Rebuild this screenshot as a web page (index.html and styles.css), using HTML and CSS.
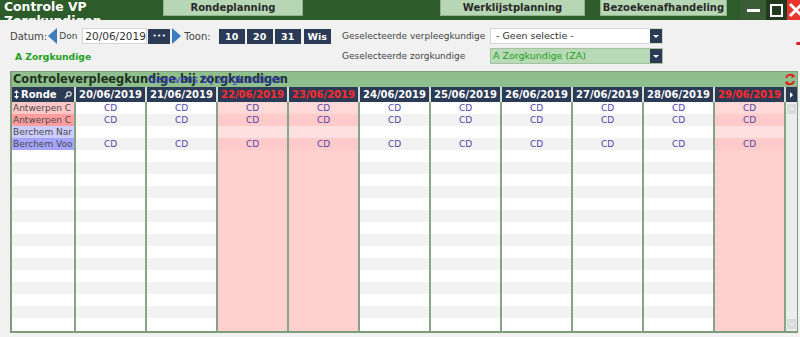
FILE: index.html
```html
<!DOCTYPE html>
<html>
<head>
<meta charset="utf-8">
<title>Controle VP Zorgkundigen</title>
<link rel="stylesheet" href="styles.css">
</head>
<body>
<header class="topbar">
  <div class="apptitle">Controle VP Zorgkundigen</div>
  <div class="tab t1">Rondeplanning</div>
  <div class="tab t2">Werklijstplanning</div>
  <div class="tab t3">Bezoekenafhandeling</div>
  <div class="winctl">
    <div class="wbtn wmin"><span class="minbar"></span></div>
    <div class="wbtn wmax"><span class="maxbox"></span></div>
    <div class="wbtn wclose"><svg width="13" height="20" viewBox="0 0 13 20"><path d="M3 4 L15 16 M15 4 L3 16" stroke="#fff" stroke-width="3" fill="none"/></svg></div>
  </div>
</header>

<section class="controls">
  <div class="leftctl">
    <div class="daterow">
      <span class="lbl">Datum:</span>
      <span class="arrow-l"></span>
      <span class="day">Don</span>
      <span class="datebox">20/06/2019</span>
      <span class="dots">•••</span>
      <span class="arrow-r"></span>
      <span class="lbl toon">Toon:</span>
      <span class="nbtn first">10</span>
      <span class="nbtn">20</span>
      <span class="nbtn">31</span>
      <span class="nbtn wis">Wis</span>
    </div>
    <div class="zk">A Zorgkundige</div>
  </div>
  <div class="rightctl">
    <span class="slbl">Geselecteerde verpleegkundige</span>
    <div class="sel"><span class="seltext">- Geen selectie -</span><span class="dd"></span></div>
    <span class="slbl">Geselecteerde zorgkundige</span>
    <div class="sel green"><span class="seltext">A Zorgkundige (ZA)</span><span class="dd"></span></div>
  </div>
  <span class="redmark"></span>
</section>

<section class="panel">
  <div class="ptitle">
    <span class="ptext">Controleverpleegkundige bij zorgkundigen</span>
    <span class="poverlay">Gegevens bij zorgkundigen</span>
    <svg class="refresh" width="12" height="13" viewBox="0 0 12 13">
      <path d="M2 5 A4.5 4.5 0 0 1 9.5 3" stroke="#e02020" stroke-width="2" fill="none"/>
      <path d="M8 0.5 L11.5 3.5 L7.5 5 Z" fill="#e02020"/>
      <path d="M10 8 A4.5 4.5 0 0 1 2.5 10" stroke="#e02020" stroke-width="2" fill="none"/>
      <path d="M4 12.5 L0.5 9.5 L4.5 8 Z" fill="#e02020"/>
    </svg>
  </div>
  <div class="gridwrap">
    <div class="gcols">
      <div class="hrow">
        <div class="hc ronde">
          <svg class="sorticon" width="5" height="9" viewBox="0 0 5 9"><path d="M2.5 0 L5 3 L0 3 Z M2.5 9 L5 6 L0 6 Z" fill="#fff"/><rect x="2" y="3" width="1" height="3" fill="#fff"/></svg>
          <span class="rtext">Ronde</span>
          <svg class="mag" width="8" height="8" viewBox="0 0 8 8"><circle cx="5" cy="3" r="2.2" stroke="#e8e8e8" stroke-width="1.2" fill="none"/><path d="M3.4 4.6 L0.8 7.2" stroke="#e8e8e8" stroke-width="1.4"/></svg>
        </div>
        <div class="hc">20/06/2019</div>
        <div class="hc">21/06/2019</div>
        <div class="hc wk">22/06/2019</div>
        <div class="hc wk">23/06/2019</div>
        <div class="hc">24/06/2019</div>
        <div class="hc">25/06/2019</div>
        <div class="hc">26/06/2019</div>
        <div class="hc">27/06/2019</div>
        <div class="hc">28/06/2019</div>
        <div class="hc wk">29/06/2019</div>
      </div>
      <div class="brow odd r1">
        <div class="bc rc">Antwerpen C</div><div class="bc">CD</div><div class="bc">CD</div><div class="bc we">CD</div><div class="bc we">CD</div><div class="bc">CD</div><div class="bc">CD</div><div class="bc">CD</div><div class="bc">CD</div><div class="bc">CD</div><div class="bc we">CD</div>
      </div>
      <div class="brow even r2">
        <div class="bc rc">Antwerpen C</div><div class="bc">CD</div><div class="bc">CD</div><div class="bc we">CD</div><div class="bc we">CD</div><div class="bc">CD</div><div class="bc">CD</div><div class="bc">CD</div><div class="bc">CD</div><div class="bc">CD</div><div class="bc we">CD</div>
      </div>
      <div class="brow odd r3">
        <div class="bc rc">Berchem Nar</div><div class="bc"></div><div class="bc"></div><div class="bc we"></div><div class="bc we"></div><div class="bc"></div><div class="bc"></div><div class="bc"></div><div class="bc"></div><div class="bc"></div><div class="bc we"></div>
      </div>
      <div class="brow even r4">
        <div class="bc rc">Berchem Voo</div><div class="bc">CD</div><div class="bc">CD</div><div class="bc we">CD</div><div class="bc we">CD</div><div class="bc">CD</div><div class="bc">CD</div><div class="bc">CD</div><div class="bc">CD</div><div class="bc">CD</div><div class="bc we">CD</div>
      </div>
      <div class="brow odd"><div class="bc rc"></div><div class="bc"></div><div class="bc"></div><div class="bc we"></div><div class="bc we"></div><div class="bc"></div><div class="bc"></div><div class="bc"></div><div class="bc"></div><div class="bc"></div><div class="bc we"></div></div>
      <div class="brow even"><div class="bc rc"></div><div class="bc"></div><div class="bc"></div><div class="bc we"></div><div class="bc we"></div><div class="bc"></div><div class="bc"></div><div class="bc"></div><div class="bc"></div><div class="bc"></div><div class="bc we"></div></div>
      <div class="brow odd"><div class="bc rc"></div><div class="bc"></div><div class="bc"></div><div class="bc we"></div><div class="bc we"></div><div class="bc"></div><div class="bc"></div><div class="bc"></div><div class="bc"></div><div class="bc"></div><div class="bc we"></div></div>
      <div class="brow even"><div class="bc rc"></div><div class="bc"></div><div class="bc"></div><div class="bc we"></div><div class="bc we"></div><div class="bc"></div><div class="bc"></div><div class="bc"></div><div class="bc"></div><div class="bc"></div><div class="bc we"></div></div>
      <div class="brow odd"><div class="bc rc"></div><div class="bc"></div><div class="bc"></div><div class="bc we"></div><div class="bc we"></div><div class="bc"></div><div class="bc"></div><div class="bc"></div><div class="bc"></div><div class="bc"></div><div class="bc we"></div></div>
      <div class="brow even"><div class="bc rc"></div><div class="bc"></div><div class="bc"></div><div class="bc we"></div><div class="bc we"></div><div class="bc"></div><div class="bc"></div><div class="bc"></div><div class="bc"></div><div class="bc"></div><div class="bc we"></div></div>
      <div class="brow odd"><div class="bc rc"></div><div class="bc"></div><div class="bc"></div><div class="bc we"></div><div class="bc we"></div><div class="bc"></div><div class="bc"></div><div class="bc"></div><div class="bc"></div><div class="bc"></div><div class="bc we"></div></div>
      <div class="brow even"><div class="bc rc"></div><div class="bc"></div><div class="bc"></div><div class="bc we"></div><div class="bc we"></div><div class="bc"></div><div class="bc"></div><div class="bc"></div><div class="bc"></div><div class="bc"></div><div class="bc we"></div></div>
      <div class="brow odd"><div class="bc rc"></div><div class="bc"></div><div class="bc"></div><div class="bc we"></div><div class="bc we"></div><div class="bc"></div><div class="bc"></div><div class="bc"></div><div class="bc"></div><div class="bc"></div><div class="bc we"></div></div>
      <div class="brow even"><div class="bc rc"></div><div class="bc"></div><div class="bc"></div><div class="bc we"></div><div class="bc we"></div><div class="bc"></div><div class="bc"></div><div class="bc"></div><div class="bc"></div><div class="bc"></div><div class="bc we"></div></div>
      <div class="brow odd"><div class="bc rc"></div><div class="bc"></div><div class="bc"></div><div class="bc we"></div><div class="bc we"></div><div class="bc"></div><div class="bc"></div><div class="bc"></div><div class="bc"></div><div class="bc"></div><div class="bc we"></div></div>
      <div class="brow even"><div class="bc rc"></div><div class="bc"></div><div class="bc"></div><div class="bc we"></div><div class="bc we"></div><div class="bc"></div><div class="bc"></div><div class="bc"></div><div class="bc"></div><div class="bc"></div><div class="bc we"></div></div>
      <div class="brow odd"><div class="bc rc"></div><div class="bc"></div><div class="bc"></div><div class="bc we"></div><div class="bc we"></div><div class="bc"></div><div class="bc"></div><div class="bc"></div><div class="bc"></div><div class="bc"></div><div class="bc we"></div></div>
      <div class="brow even"><div class="bc rc"></div><div class="bc"></div><div class="bc"></div><div class="bc we"></div><div class="bc we"></div><div class="bc"></div><div class="bc"></div><div class="bc"></div><div class="bc"></div><div class="bc"></div><div class="bc we"></div></div>
      <div class="brow odd last"><div class="bc rc"></div><div class="bc"></div><div class="bc"></div><div class="bc we"></div><div class="bc we"></div><div class="bc"></div><div class="bc"></div><div class="bc"></div><div class="bc"></div><div class="bc"></div><div class="bc we"></div></div>
    </div>
    <div class="vcol">
      <div class="hscroll"><span class="tri-r"></span></div>
      <div class="vscroll">
        <span class="sbtn"><span class="chev up"></span></span>
        <span class="sbtn"><span class="chev down"></span></span>
      </div>
    </div>
  </div>
</section>
</body>
</html>
```

FILE: styles.css
```css
* { box-sizing: border-box; }

body {
  margin: 0;
  width: 800px;
  height: 337px;
  overflow: hidden;
  background: #f1f1f1;
  font-family: "DejaVu Sans", Verdana, sans-serif;
  color: #444;
}

/* ---------- top bar ---------- */
.topbar {
  display: flex;
  height: 20px;
  background: #2e5b2a;
  overflow: hidden;
}
.apptitle {
  flex: 0 0 110px;
  margin-right: 53px;
  padding-left: 4px;
  color: #fff;
  font-weight: bold;
  font-size: 12.4px;
  line-height: 14px;
}
.tab {
  height: 16px;
  background: #b6d6b4;
  border: 1px solid #8fb58c;
  border-top: none;
  color: #2a2a2a;
  font-weight: bold;
  font-size: 10px;
  line-height: 15px;
  text-align: center;
  white-space: nowrap;
}
.t1 { width: 140px; }
.t2 { width: 145px; margin-left: 137px; }
.t3 { width: 127px; margin-left: 15px; }
.winctl {
  margin-left: auto;
  display: flex;
  height: 20px;
}
.wbtn {
  height: 20px;
  display: flex;
  align-items: center;
  justify-content: center;
  overflow: hidden;
}
.wmin { width: 26px; background: #3a5d36; }
.minbar { width: 13px; height: 3px; background: #fff; }
.wmax { width: 21px; background: #223a20; }
.maxbox { width: 13px; height: 13px; border: 2px solid #fff; }
.wclose { width: 13px; background: #e8352f; justify-content: flex-start; }

/* ---------- controls ---------- */
.controls {
  position: relative;
  display: flex;
  height: 51px;
  padding: 8px 0 0 10px;
}
.leftctl { width: 322px; }
.daterow {
  display: flex;
  align-items: center;
  height: 16px;
}
.lbl { font-size: 10px; color: #444; }
.arrow-l {
  width: 0; height: 0;
  margin-left: 1px;
  border-top: 8px solid transparent;
  border-bottom: 8px solid transparent;
  border-right: 9px solid #3c7dc0;
}
.day { font-size: 9px; margin-left: 2px; color: #444; }
.datebox {
  margin-left: 5px;
  width: 65px;
  height: 16px;
  background: #fff;
  border: 1px solid #d4d4d4;
  font-size: 10.5px;
  line-height: 14px;
  padding-left: 2px;
  color: #333;
  white-space: nowrap;
  overflow: hidden;
}
.dots {
  margin-left: 1px;
  width: 22px;
  height: 15px;
  background: #2b3a55;
  color: #fff;
  font-size: 7px;
  line-height: 15px;
  text-align: center;
  letter-spacing: 0.5px;
}
.arrow-r {
  width: 0; height: 0;
  margin-left: 2px;
  border-top: 8px solid transparent;
  border-bottom: 8px solid transparent;
  border-left: 9px solid #3c7dc0;
}
.toon { margin-left: 3px; }
.nbtn {
  width: 26px;
  height: 15px;
  margin-left: 2px;
  background: #2b3a55;
  color: #fff;
  font-weight: bold;
  font-size: 9.5px;
  line-height: 15px;
  text-align: center;
}
.nbtn.first { margin-left: 8px; }
.nbtn.wis { width: 27px; margin-left: 3px; }
.zk {
  margin-top: 7px;
  margin-left: 5px;
  color: #23a023;
  font-weight: bold;
  font-size: 9.2px;
  line-height: 12px;
}
.rightctl {
  margin-left: 10px;
  display: grid;
  grid-template-columns: 148px 173px;
  grid-template-rows: 16px 16px;
  row-gap: 4px;
  align-items: center;
}
.slbl { font-size: 9px; color: #444; white-space: nowrap; }
.sel {
  display: flex;
  height: 16px;
  background: #fff;
  border: 1px solid #d4d4d4;
}
.sel.green { background: #b8dab6; border-color: #a4c2a2; }
.seltext {
  flex: 1;
  font-size: 9.5px;
  line-height: 14px;
  padding-left: 5px;
  color: #333;
}
.sel.green .seltext { color: #23a023; padding-left: 2px; }
.dd {
  width: 12px;
  background: #2b3a55;
  position: relative;
}
.dd::after {
  content: "";
  position: absolute;
  left: 3px;
  top: 6px;
  border-left: 3px solid transparent;
  border-right: 3px solid transparent;
  border-top: 3px solid #fff;
}
.redmark {
  position: absolute;
  right: 0;
  top: 22px;
  width: 4px;
  height: 3px;
  background: #e02020;
  border-radius: 2px 0 0 2px;
}

/* ---------- grid panel ---------- */
.panel {
  margin-left: 10px;
  width: 788px;
  border-top: 1px solid #7c9c7c;
  border-left: 2px solid #7c9c7c;
  border-right: 1px solid #7c9c7c;
  border-bottom: 2px solid #7c9c7c;
  background: #fff;
}
.ptitle {
  position: relative;
  height: 15px;
  background: #8fbf8d;
  padding-left: 1px;
  font-size: 11.4px;
  line-height: 15px;
  overflow: hidden;
}
.ptext {
  font-weight: bold;
  color: #1f321f;
  white-space: nowrap;
}
.poverlay {
  position: absolute;
  left: 136px;
  top: 1px;
  font-size: 10px;
  line-height: 13px;
  color: #3a3fd0;
  white-space: nowrap;
}
.refresh { position: absolute; right: 1px; top: 1px; }

.gridwrap { display: flex; }
.gcols { width: 772px; }

.hrow, .brow {
  display: grid;
  grid-template-columns: 62px repeat(10, 71px);
}
.hrow { height: 15px; }
.hc {
  background: #2b3a55;
  border-left: 2px solid #d5ddd5;
  color: #fff;
  font-weight: bold;
  font-size: 10px;
  line-height: 15px;
  text-align: center;
  white-space: nowrap;
  overflow: hidden;
}
.hc.wk { color: #ff2b2b; }
.hc.ronde {
  border-left: none;
  display: flex;
  align-items: center;
  padding-left: 2px;
}
.sorticon { flex: none; }
.rtext { margin-left: 2px; }
.mag { margin-left: auto; margin-right: 2px; }

.brow { height: 12px; }
.brow.last { height: 13px; }
.bc {
  border-left: 2px solid #85a485;
  font-size: 9px;
  line-height: 12px;
  text-align: center;
  color: #5545a8;
  white-space: nowrap;
  overflow: hidden;
}
.brow.odd .bc { background: #fff; }
.brow.even .bc { background: #f2f2f2; }
.brow .bc.we { background: #ffd0d0; }
.brow.r1 .bc.we { background: #ffd8d8; }
.brow.r2 .bc.we { background: #ffcaca; }
.brow.r3 .bc.we { background: #ffe0e0; }
.brow.r4 .bc.we { background: #ffcaca; }
.bc.rc {
  border-left: none;
  text-align: left;
  padding-left: 1px;
  color: #4a4a4a;
}
.brow.r1 .bc.rc { background: #ffc8c8; }
.brow.r2 .bc.rc { background: #ff9e9e; }
.brow.r3 .bc.rc { background: #cdcdff; }
.brow.r4 .bc.rc { background: #a4a4ff; }

.vcol {
  width: 13px;
  display: flex;
  flex-direction: column;
}
.hscroll {
  height: 15px;
  background: #2b3a55;
  border-left: 2px solid #d5ddd5;
  display: flex;
  align-items: center;
  justify-content: center;
}
.tri-r {
  border-top: 3px solid transparent;
  border-bottom: 3px solid transparent;
  border-left: 3px solid #fff;
}
.vscroll {
  flex: 1;
  background: #ececec;
  border-left: 2px solid #85a485;
  display: flex;
  flex-direction: column;
  justify-content: space-between;
  padding: 2px 1px 2px 1px;
}
.sbtn {
  width: 9px;
  height: 10px;
  background: #dadada;
  display: flex;
  align-items: center;
  justify-content: center;
}
.chev {
  width: 4px;
  height: 4px;
  border-left: 1px solid #f4f4f4;
  border-top: 1px solid #f4f4f4;
}
.chev.up { transform: rotate(45deg); margin-top: 2px; }
.chev.down { transform: rotate(225deg); margin-bottom: 2px; }
```
